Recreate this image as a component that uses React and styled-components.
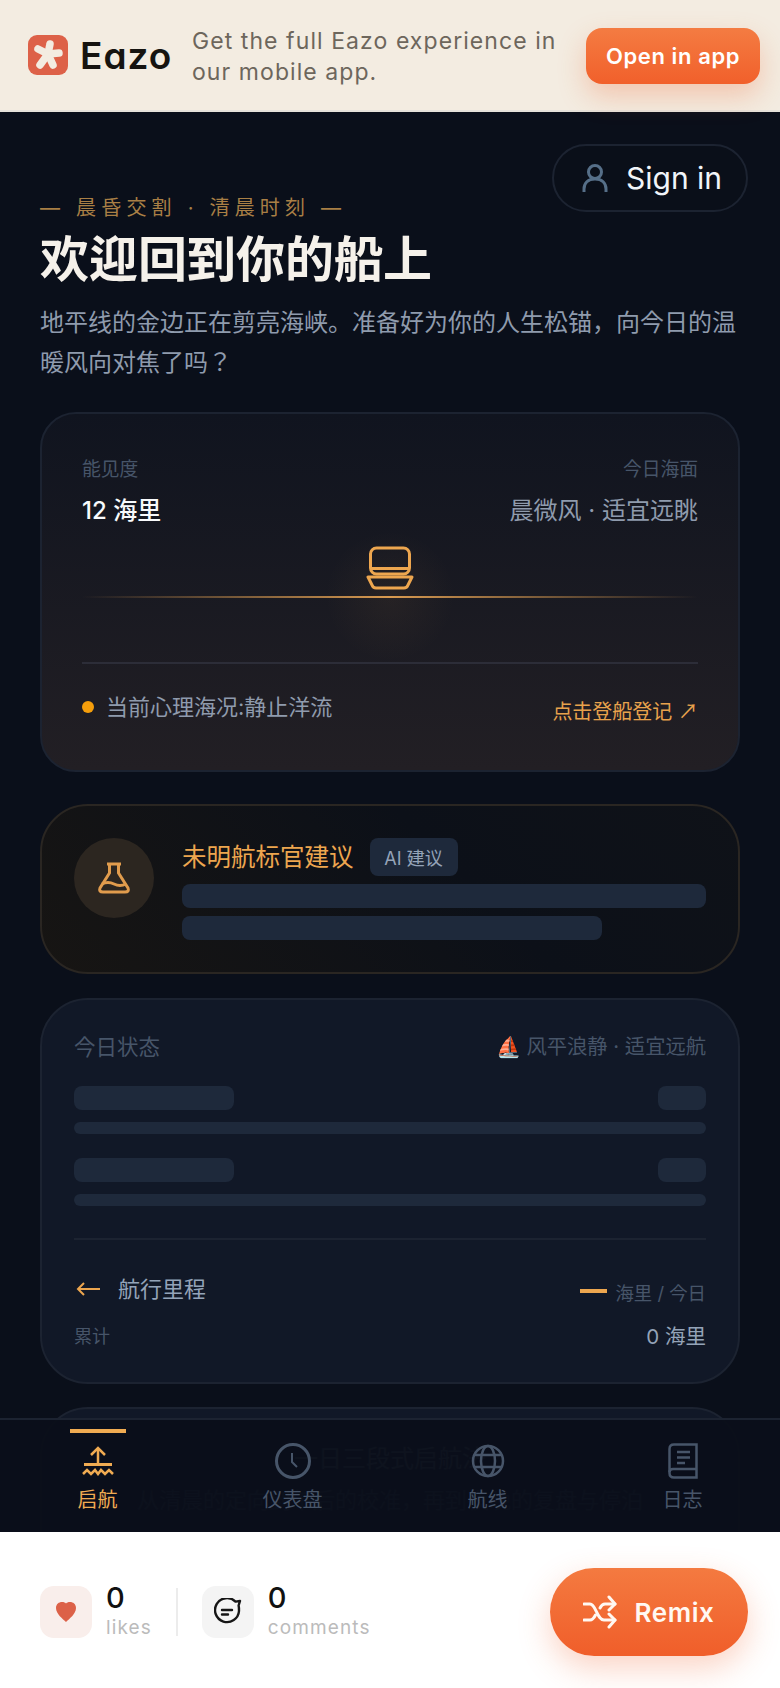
import styled, { createGlobalStyle } from "styled-components";

const GlobalStyle = createGlobalStyle`
  html, body {
    margin: 0;
    padding: 0;
    background: #0a0f1a;
  }
  * { box-sizing: border-box; }
  body {
    font-family: Inter, "Noto Sans CJK KR", sans-serif;
  }
`;

const Page = styled.div`
  position: relative;
  width: 780px;
  height: 1688px;
  overflow: hidden;
  background: #0a0f1a;
`;

/* top promo strip */
const Banner = styled.div`
  height: 112px;
  display: flex;
  align-items: center;
  padding: 0 20px 0 28px;
  background: #f3ece1;
  border-bottom: 2px solid #e6e2da;
`;

const LogoMark = styled.div`
  width: 40px;
  height: 40px;
  margin-right: 12px;
  flex: none;
`;

const LogoText = styled.span`
  width: 108px;
  flex: none;
  font-size: 37px;
  font-weight: 600;
  letter-spacing: 1px;
  color: #161410;
  font-feature-settings: "cv11";
`;

const BannerText = styled.p`
  flex: 1;
  margin: 4px 0 0 4px;
  font-size: 23px;
  line-height: 31px;
  letter-spacing: 1.07px;
  color: #6d665c;
`;

const OpenButton = styled.button`
  width: 174px;
  height: 56px;
  margin-top: 2px;
  border: none;
  border-radius: 16px;
  font-family: inherit;
  font-size: 22px;
  font-weight: 600;
  letter-spacing: 0.6px;
  color: #fff;
  background: linear-gradient(180deg, #f47c42, #f1602b);
  box-shadow: 0 12px 28px rgba(240, 96, 43, 0.28);
`;

const SignIn = styled.button`
  position: absolute;
  top: 144px;
  right: 32px;
  width: 196px;
  height: 68px;
  display: flex;
  align-items: center;
  gap: 18px;
  padding: 0 0 0 28px;
  border: 2px solid #1c2331;
  border-radius: 34px;
  background: rgba(10, 15, 26, 0.9);
  font-family: inherit;
  font-size: 30px;
  color: #f1f5f9;
`;

const Main = styled.main`
  padding: 81px 40px 0;
`;

const Eyebrow = styled.div`
  font-size: 20px;
  line-height: 30px;
  letter-spacing: 5.2px;
  color: #a97f45;
  white-space: pre;
`;

const Title = styled.h1`
  margin: 7px 0 0;
  font-size: 49px;
  line-height: 60px;
  font-weight: 700;
  color: #f5f1ea;
`;

const Lead = styled.p`
  margin: 13px 0 0;
  font-size: 24px;
  line-height: 40px;
  color: #8f9bad;
`;

const Card = styled.section`
  width: 700px;
  border-radius: ${(props) => props.$radius || 48}px;
  border: 2px solid ${(props) => props.$line || "#1c2331"};
  background: ${(props) => props.$bg || "#111827"};
`;

const HorizonCard = styled(Card)`
  height: 360px;
  margin-top: 29px;
  padding: 41px 40px 0;
`;

const SplitRow = styled.div`
  display: flex;
  justify-content: space-between;
  align-items: ${(props) => props.$align || "center"};
`;

const ValueRow = styled(SplitRow)`
  margin-top: 8px;
`;

const MutedLabel = styled.span`
  font-size: 18.8px;
  line-height: 30px;
  color: #475569;
`;

const MileValue = styled.span`
  font-size: 24px;
  line-height: 36px;
  font-weight: 500;
  color: #f8fafc;
`;

const SeaValue = styled.span`
  font-size: 24px;
  line-height: 36px;
  color: #8f9bad;
`;

const Horizon = styled.div`
  position: relative;
  height: 133px;
  display: flex;
  justify-content: center;
  padding-top: 17px;
`;

const HorizonGlow = styled.div`
  position: absolute;
  left: 50%;
  top: 2px;
  width: 130px;
  height: 130px;
  transform: translateX(-50%);
  background: radial-gradient(closest-side, rgba(240, 168, 79, 0.06), rgba(240, 168, 79, 0));
`;

const HorizonLine = styled.div`
  position: absolute;
  left: 0;
  right: 0;
  top: 67px;
  height: 2px;
  background: linear-gradient(90deg, rgba(240, 168, 79, 0), #d89a50 50%, rgba(240, 168, 79, 0));
`;

const Rule = styled.div`
  height: 2px;
  margin-top: ${(props) => props.$top || 0}px;
  background: ${(props) => props.$color || "#1c2331"};
`;

const MoodRow = styled.div`
  display: flex;
  justify-content: space-between;
  padding-top: 22px;
`;

const Mood = styled.span`
  display: flex;
  align-items: center;
  gap: 12px;
  font-size: 22px;
  line-height: 34px;
  color: #8f9bad;
`;

const Dot = styled.i`
  width: 12px;
  height: 12px;
  border-radius: 50%;
  background: #f59e0b;
`;

const BoardLink = styled.span`
  margin-top: 10px;
  font-size: 20px;
  line-height: 30px;
  color: #e8a24c;
`;

const ThinArrow = styled.span`
  font-family: "Noto Sans CJK SC", sans-serif;
`;

const AdviceCard = styled(Card)`
  height: 170px;
  margin-top: 32px;
  padding: 32px;
  display: flex;
  gap: 28px;
`;

const AdviceIcon = styled.div`
  width: 80px;
  height: 80px;
  flex: none;
  display: flex;
  align-items: center;
  justify-content: center;
  border-radius: 50%;
  background: #2c2620;
`;

const AdviceBody = styled.div`
  flex: 1;
`;

const AdviceHead = styled.div`
  display: flex;
  align-items: center;
  gap: 16px;
  height: 38px;
  margin-bottom: 8px;
`;

const AdviceTitle = styled.span`
  margin-top: -3px;
  font-size: 24.5px;
  color: #eda64f;
`;

const Tag = styled.span`
  width: 88px;
  height: 38px;
  display: flex;
  align-items: center;
  justify-content: center;
  border-radius: 8px;
  background: #1e293b;
  font-size: 18px;
  color: #94a3b8;
`;

const Skeleton = styled.div`
  width: ${(props) => props.$w || "100%"};
  height: ${(props) => props.$h || 24}px;
  margin-top: ${(props) => props.$top || 0}px;
  border-radius: ${(props) => props.$r || 8}px;
  background: #1e293b;
`;

const StatusCard = styled(Card)`
  height: 386px;
  margin-top: 24px;
  padding: 28px 32px 0;
`;

const StatusHead = styled(SplitRow)`
  height: 34px;
  font-size: 20.3px;
  color: #475569;
  margin-bottom: 24px;
`;

const StatusTitle = styled.span`
  font-size: 21.5px;
`;

const SailText = styled.span`
  display: flex;
  align-items: center;
  gap: 4px;
`;

const SkeletonRow = styled.div`
  margin-bottom: 24px;
`;

const MilesHead = styled(SplitRow)`
  margin-top: 27px;
  height: 40px;
`;

const MilesTitle = styled.span`
  display: flex;
  align-items: center;
  gap: 18px;
  font-size: 22px;
  color: #94a3b8;
`;

const ArrowWrap = styled.span`
  display: flex;
  margin-top: 3px;
`;

const MilesRate = styled.span`
  display: flex;
  align-items: center;
  gap: 8px;
  margin-top: 10px;
  font-size: 18.4px;
  color: #475569;
`;

const Dash = styled.i`
  width: 27px;
  height: 4px;
  margin-top: -3px;
  background: #eda64f;
`;

const MilesTotal = styled(SplitRow)`
  margin-top: 11px;
  height: 34px;
`;

const TotalLabel = styled.span`
  font-size: 18px;
  color: #475569;
`;

const TotalValue = styled.span`
  font-size: 20.5px;
  color: #94a3b8;
`;

const PlanCard = styled(Card)`
  height: 300px;
  margin-top: 23px;
  padding-top: 32px;
  text-align: center;
`;

const PlanTitle = styled.div`
  font-size: 24px;
  line-height: 36px;
  color: #7a8799;
`;

const PlanText = styled.div`
  margin-top: 7px;
  font-size: 22px;
  line-height: 32px;
  color: #4a5568;
`;

/* tab bar floats over the scrolled page */
const TabBar = styled.nav`
  position: absolute;
  left: 0;
  right: 0;
  top: 1418px;
  height: 114px;
  display: grid;
  grid-template-columns: repeat(4, 1fr);
  background: rgba(10, 15, 26, 0.965);
  border-top: 2px solid #1c2331;
`;

const Tab = styled.div`
  position: relative;
  display: flex;
  flex-direction: column;
  align-items: center;
  padding-top: 22px;
  color: ${(props) => (props.$active ? "#f0ab52" : "#475569")};
`;

const TabMark = styled.i`
  position: absolute;
  top: 9px;
  left: 50%;
  width: 56px;
  height: 4px;
  margin-left: -28px;
  background: #f0ab52;
`;

const TabIcon = styled.div`
  height: 38px;
  display: flex;
  align-items: center;
`;

const TabLabel = styled.span`
  margin-top: 5px;
  font-size: 20px;
  line-height: 30px;
`;

/* white social strip along the bottom */
const Footer = styled.footer`
  position: absolute;
  left: 0;
  right: 0;
  bottom: 0;
  height: 156px;
  display: flex;
  align-items: center;
  justify-content: space-between;
  padding: 0 32px 0 40px;
  background: #fff;
`;

const Stats = styled.div`
  display: flex;
  align-items: center;
  margin-top: 4px;
`;

const Stat = styled.div`
  display: flex;
  align-items: center;
  gap: 14px;
`;

const StatTile = styled.div`
  width: 52px;
  height: 52px;
  display: flex;
  align-items: center;
  justify-content: center;
  border-radius: 14px;
  background: ${(props) => props.$bg};
`;

const StatText = styled.div`
  display: flex;
  flex-direction: column;
  margin-top: -2px;
`;

const StatCount = styled.span`
  font-size: 29px;
  line-height: 34px;
  font-weight: 500;
  color: #111;
`;

const StatName = styled.span`
  font-size: 19px;
  line-height: 26px;
  letter-spacing: 1.1px;
  color: #bbbbbb;
`;

const StatDivider = styled.div`
  width: 2px;
  height: 48px;
  margin: 0 24px 0 24px;
  background: #ececec;
`;

const RemixButton = styled.button`
  width: 198px;
  height: 88px;
  margin-top: 4px;
  display: flex;
  align-items: center;
  justify-content: center;
  gap: 17px;
  border: none;
  border-radius: 44px;
  font-family: inherit;
  font-size: 26px;
  font-weight: 600;
  letter-spacing: 0.6px;
  color: #fff8f2;
  background: linear-gradient(180deg, #f47a40, #f05e2a);
  box-shadow: 0 12px 32px rgba(240, 96, 43, 0.28);
`;

const Logo = () => (
  <svg width="40" height="40" viewBox="0 0 40 40">
    <rect width="40" height="40" rx="9" fill="#dd6148" />
    <g stroke="#f3ece1" strokeWidth="7.5" strokeLinecap="round">
      <path d="M20 19 L22 9" />
      <path d="M20 19 L31 18" />
      <path d="M20 19 L25 30" />
      <path d="M20 19 L12 30" />
      <path d="M20 19 L10 14" />
    </g>
  </svg>
);

const UserIcon = () => (
  <svg width="26" height="30" viewBox="0 0 26 30" fill="none" stroke="#64809c" strokeWidth="3" opacity="0.85">
    <circle cx="13" cy="9" r="6.5" />
    <path d="M2 29 v-3 c0 -6 4 -10 11 -10 s11 4 11 10 v3" />
  </svg>
);

const ShipIcon = () => (
  <svg width="48" height="44" viewBox="0 0 48 44" fill="none" stroke="#eda64f" strokeWidth="3" strokeLinejoin="round">
    <rect x="4.5" y="2" width="39" height="26" rx="6" />
    <path d="M5 22.5 H43" />
    <path d="M2 31 H46 L42 39 Q41 42 38 42 H10 Q7 42 6 39 Z" />
  </svg>
);

const FlaskIcon = () => (
  <svg width="34" height="32" viewBox="0 0 34 32" fill="none" stroke="#e19c4d" strokeWidth="3" strokeLinejoin="round">
    <path d="M10 2 H24" />
    <path d="M12.5 2 V11 L3 26 Q1.5 30 6 30 H28 Q32.5 30 31 26 L21.5 11 V2" />
    <path d="M5 22 Q11 19 17 22 T29 22" />
  </svg>
);

const BackArrow = () => (
  <svg width="26" height="18" viewBox="0 0 26 18" fill="none" stroke="#eda64f" strokeWidth="2">
    <path d="M26 9 H4" />
    <path d="M10 3 L4 9 L10 15" />
  </svg>
);

const SetSailIcon = () => (
  <svg width="32" height="30" viewBox="0 0 32 30" fill="none" stroke="currentColor" strokeWidth="2.5">
    <path d="M16 18 V2" />
    <path d="M9 9 L16 2 L23 9" />
    <path d="M2 18.5 H30" strokeWidth="3" />
    <path d="M1 28 L5 24 L9 28 L13 24 L16 28 L19 24 L23 28 L27 24 L31 28" />
  </svg>
);

const ClockIcon = () => (
  <svg width="38" height="38" viewBox="0 0 38 38" fill="none" stroke="currentColor" strokeWidth="3">
    <circle cx="19" cy="19" r="16.5" />
    <path d="M18 11 V20 L23 25" strokeWidth="2" />
  </svg>
);

const GlobeIcon = () => (
  <svg width="34" height="34" viewBox="0 0 34 34" fill="none" stroke="currentColor" strokeWidth="2.5">
    <circle cx="17" cy="17" r="15" />
    <ellipse cx="17" cy="17" rx="7" ry="15" />
    <path d="M3.5 11 H30.5 M3.5 23 H30.5" />
  </svg>
);

const BookIcon = () => (
  <svg width="30" height="36" viewBox="0 0 30 36" fill="none" stroke="currentColor" strokeWidth="2.5">
    <path d="M6 1.5 H28.5 V34.5 H6 Q1.5 34.5 1.5 30 V6 Q1.5 1.5 6 1.5 Z" />
    <path d="M1.5 29 Q1.5 26 5 26 H28.5" />
    <path d="M9 9 H22 M9 14.5 H22 M9 20 H17" />
  </svg>
);

const HeartIcon = () => (
  <svg width="24" height="24" viewBox="0 0 24 24">
    <path d="M12 22 C9 19 2 14 2 8 C2 4 5 2 8 2 C10 2 11 2.6 12 3.4 C13 2.6 14 2 16 2 C19 2 22 4 22 8 C22 14 15 19 12 22 Z" fill="#dc6148" />
  </svg>
);

const CommentIcon = () => (
  <svg width="28" height="28" viewBox="0 0 28 28" fill="none" stroke="#161616" strokeWidth="2.4" strokeLinecap="round">
    <path d="M26 3 L21.5 3.6 A12 12 0 1 0 25 13 Q25 9 24.6 7.5 Z" strokeLinejoin="round" />
    <path d="M8 12 H18 M8 16.5 H14" />
  </svg>
);

const ShuffleIcon = () => (
  <svg width="34" height="34" viewBox="0 0 34 34" fill="none" stroke="#fff8f2" strokeWidth="3" strokeLinecap="round" strokeLinejoin="round">
    <path d="M1 9 H7 C13 9 14 25 21 25 H32" />
    <path d="M1 25 H7 C9 25 11 23 12.5 20" />
    <path d="M17 13 C18 11 19 9 22 9 H32" />
    <path d="M26 2 L32 9 L26 15" />
    <path d="M26 19 L32 25 L26 32" />
  </svg>
);

const tabs = [
  { label: "启航", icon: <SetSailIcon />, active: true },
  { label: "仪表盘", icon: <ClockIcon /> },
  { label: "航线", icon: <GlobeIcon /> },
  { label: "日志", icon: <BookIcon /> },
];

const App = () => {
  return (
    <Page>
      <GlobalStyle />
      <Banner>
        <LogoMark>
          <Logo />
        </LogoMark>
        <LogoText>Eazo</LogoText>
        <BannerText>Get the full Eazo experience in our mobile app.</BannerText>
        <OpenButton>Open in app</OpenButton>
      </Banner>

      <SignIn>
        <UserIcon />
        Sign in
      </SignIn>

      <Main>
        <Eyebrow>— 晨昏交割 · 清晨时刻 —</Eyebrow>
        <Title>欢迎回到你的船上</Title>
        <Lead>地平线的金边正在剪亮海峡。准备好为你的人生松锚，向今日的温暖风向对焦了吗？</Lead>

        <HorizonCard $radius={36} $bg="linear-gradient(180deg, #10141f, #221f24)">
          <SplitRow>
            <MutedLabel>能见度</MutedLabel>
            <MutedLabel>今日海面</MutedLabel>
          </SplitRow>
          <ValueRow>
            <MileValue>12 海里</MileValue>
            <SeaValue>晨微风 · 适宜远眺</SeaValue>
          </ValueRow>
          <Horizon>
            <HorizonGlow />
            <HorizonLine />
            <ShipIcon />
          </Horizon>
          <Rule $color="#2c2d38" />
          <MoodRow>
            <Mood>
              <Dot />
              当前心理海况:静止洋流
            </Mood>
            <BoardLink>
              点击登船登记 <ThinArrow>↗</ThinArrow>
            </BoardLink>
          </MoodRow>
        </HorizonCard>

        <AdviceCard $line="#2a2622" $bg="linear-gradient(45deg, #171513, #0c1018 60%, #0f1218)">
          <AdviceIcon>
            <FlaskIcon />
          </AdviceIcon>
          <AdviceBody>
            <AdviceHead>
              <AdviceTitle>未明航标官建议</AdviceTitle>
              <Tag>AI 建议</Tag>
            </AdviceHead>
            <Skeleton />
            <Skeleton $w="420px" $top={8} />
          </AdviceBody>
        </AdviceCard>

        <StatusCard>
          <StatusHead>
            <StatusTitle>今日状态</StatusTitle>
            <SailText>⛵ 风平浪静 · 适宜远航</SailText>
          </StatusHead>
          {[0, 1].map((row) => (
            <SkeletonRow key={row}>
              <SplitRow>
                <Skeleton $w="160px" />
                <Skeleton $w="48px" />
              </SplitRow>
              <Skeleton $h={12} $top={12} $r={6} />
            </SkeletonRow>
          ))}
          <Rule $top={32} />
          <MilesHead>
            <MilesTitle>
              <ArrowWrap>
                <BackArrow />
              </ArrowWrap>
              航行里程
            </MilesTitle>
            <MilesRate>
              <Dash />
              海里 / 今日
            </MilesRate>
          </MilesHead>
          <MilesTotal>
            <TotalLabel>累计</TotalLabel>
            <TotalValue>0 海里</TotalValue>
          </MilesTotal>
        </StatusCard>

        <PlanCard>
          <PlanTitle>一日三段式启航法</PlanTitle>
          <PlanText>从清晨的定向到午后的校准，再到夜晚的复盘与停泊</PlanText>
        </PlanCard>
      </Main>

      <TabBar>
        {tabs.map((tab) => (
          <Tab key={tab.label} $active={tab.active}>
            {tab.active && <TabMark />}
            <TabIcon>{tab.icon}</TabIcon>
            <TabLabel>{tab.label}</TabLabel>
          </Tab>
        ))}
      </TabBar>

      <Footer>
        <Stats>
          <Stat>
            <StatTile $bg="#f9eeeb">
              <HeartIcon />
            </StatTile>
            <StatText>
              <StatCount>0</StatCount>
              <StatName>likes</StatName>
            </StatText>
          </Stat>
          <StatDivider />
          <Stat>
            <StatTile $bg="#f4f4f4">
              <CommentIcon />
            </StatTile>
            <StatText>
              <StatCount>0</StatCount>
              <StatName>comments</StatName>
            </StatText>
          </Stat>
        </Stats>
        <RemixButton>
          <ShuffleIcon />
          Remix
        </RemixButton>
      </Footer>
    </Page>
  );
};

export default App;
